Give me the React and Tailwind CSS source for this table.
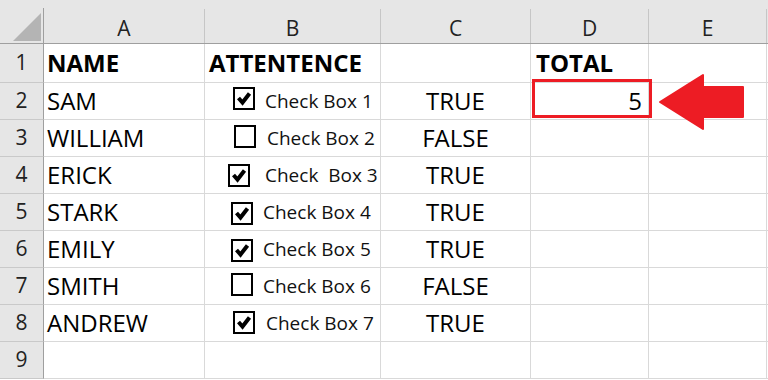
import React from 'react';

const columns = ['A', 'B', 'C', 'D', 'E'];

// per-row nudges so the form-control checkboxes sit where the sheet has them
const rows = [
  { n: 2, name: 'SAM', checked: true, label: 'Check Box 1', value: 'TRUE', pad: 'pl-[28px]', gap: 'gap-[10px]', shift: '-translate-y-[3px]' },
  { n: 3, name: 'WILLIAM', checked: false, label: 'Check Box 2', value: 'FALSE', pad: 'pl-[29px]', gap: 'gap-[11px]', shift: '-translate-y-[2px]' },
  { n: 4, name: 'ERICK', checked: true, label: 'Check\u00a0\u00a0Box 3', value: 'TRUE', pad: 'pl-[23px]', gap: 'gap-[15px]', shift: 'translate-y-0' },
  { n: 5, name: 'STARK', checked: true, label: 'Check Box 4', value: 'TRUE', pad: 'pl-[26px]', gap: 'gap-[10px]', shift: 'translate-y-[1px]' },
  { n: 6, name: 'EMILY', checked: true, label: 'Check Box 5', value: 'TRUE', pad: 'pl-[26px]', gap: 'gap-[10px]', shift: 'translate-y-[1px]' },
  { n: 7, name: 'SMITH', checked: false, label: 'Check Box 6', value: 'FALSE', pad: 'pl-[26px]', gap: 'gap-[10px]', shift: '-translate-y-[2px]' },
  { n: 8, name: 'ANDREW', checked: true, label: 'Check Box 7', value: 'TRUE', pad: 'pl-[28px]', gap: 'gap-[11px]', shift: '-translate-y-[1px]' },
];

const cell = 'border-r border-b border-[#d9d9d9] flex items-center';
const rowHead =
  'flex items-center justify-center bg-[#e6e6e6] border-r border-r-[#9f9f9f] border-b border-b-[#c9c9c9] text-[21px] text-[#222]';

const CheckBox = ({ checked, shift }) => (
  <span className={`flex h-[23px] w-[22px] shrink-0 items-center justify-center border-2 border-black bg-white ${shift}`}>
    {checked && (
      <svg viewBox="0 0 18 18" className="h-[18px] w-[18px]">
        <path d="M3.5 9 L7.5 13.5 L14.5 4.5" fill="none" stroke="#000" strokeWidth="4" />
      </svg>
    )}
  </span>
);

const ColHead = ({ label }) => (
  <div className="flex bg-[#e6e6e6] border-b border-[#9f9f9f]">
    <div className="flex flex-1 items-center justify-center pt-[15px] text-[21px] text-[#222]">{label}</div>
    <div className="mt-[9px] w-px bg-[#c6c6c6]" />
  </div>
);

const Arrow = () => (
  <svg className="absolute left-[656px] top-[72px]" width="92" height="60" viewBox="0 0 92 60">
    <polygon
      points="4,30 47,3 47,15 87,15 87,45 47,45 47,57"
      fill="#ed1c24"
      stroke="#ed1c24"
      strokeWidth="2"
      strokeLinejoin="round"
    />
  </svg>
);

export default function App() {
  return (
    <div className="relative h-[380px] w-[768px] overflow-hidden bg-white font-['Open_Sans',sans-serif] text-black">
      <div className="grid grid-cols-[44px_161px_176px_150px_118px_118px_1fr] grid-rows-[44px_39px_repeat(8,37px)]">
        {/* corner */}
        <div className="flex bg-[#e6e6e6] border-b border-[#9f9f9f]">
          <div className="flex flex-1 items-end justify-end pb-[2px] pr-[2px]">
            <svg width="28" height="28" viewBox="0 0 28 28">
              <polygon points="0,28 28,0 28,28" fill="#b4b4b4" />
            </svg>
          </div>
          <div className="mt-[8px] w-px bg-[#9f9f9f]" />
        </div>
        {columns.map((c) => (
          <ColHead key={c} label={c} />
        ))}
        <div className="bg-[#e6e6e6] border-b border-[#9f9f9f]" />

        {/* row 1 */}
        <div className={rowHead}>1</div>
        <div className={`${cell} pl-[3px] text-[24px] font-bold`}>NAME</div>
        <div className={`${cell} pl-[4px] text-[24px] font-bold`}>ATTENTENCE</div>
        <div className={cell} />
        <div className={`${cell} pl-[5px] text-[24px] font-bold`}>TOTAL</div>
        <div className={cell} />
        <div className="border-b border-[#d9d9d9]" />

        {rows.map((r) => (
          <React.Fragment key={r.n}>
            <div className={rowHead}>{r.n}</div>
            <div className={`${cell} pl-[3px] text-[24px]`}>{r.name}</div>
            <div className={`${cell} ${r.pad} ${r.gap}`}>
              <CheckBox checked={r.checked} shift={r.shift} />
              <span className="whitespace-pre text-[19px] text-[#111]">{r.label}</span>
            </div>
            <div className={`${cell} justify-center text-[24px]`}>{r.value}</div>
            <div className={`${cell} relative justify-end pr-[6px] text-[24px]`}>
              {r.n === 2 && (
                <>
                  <span>5</span>
                  <div className="absolute left-[1px] top-[-4px] z-10 h-[39px] w-[120px] border-[3px] border-[#ed1c24]" />
                </>
              )}
            </div>
            <div className={cell} />
            <div className="border-b border-[#d9d9d9]" />
          </React.Fragment>
        ))}

        {/* row 9 */}
        <div className={rowHead}>9</div>
        <div className={cell} />
        <div className={cell} />
        <div className={cell} />
        <div className={cell} />
        <div className={cell} />
        <div className="border-b border-[#d9d9d9]" />
      </div>
      <Arrow />
    </div>
  );
}
